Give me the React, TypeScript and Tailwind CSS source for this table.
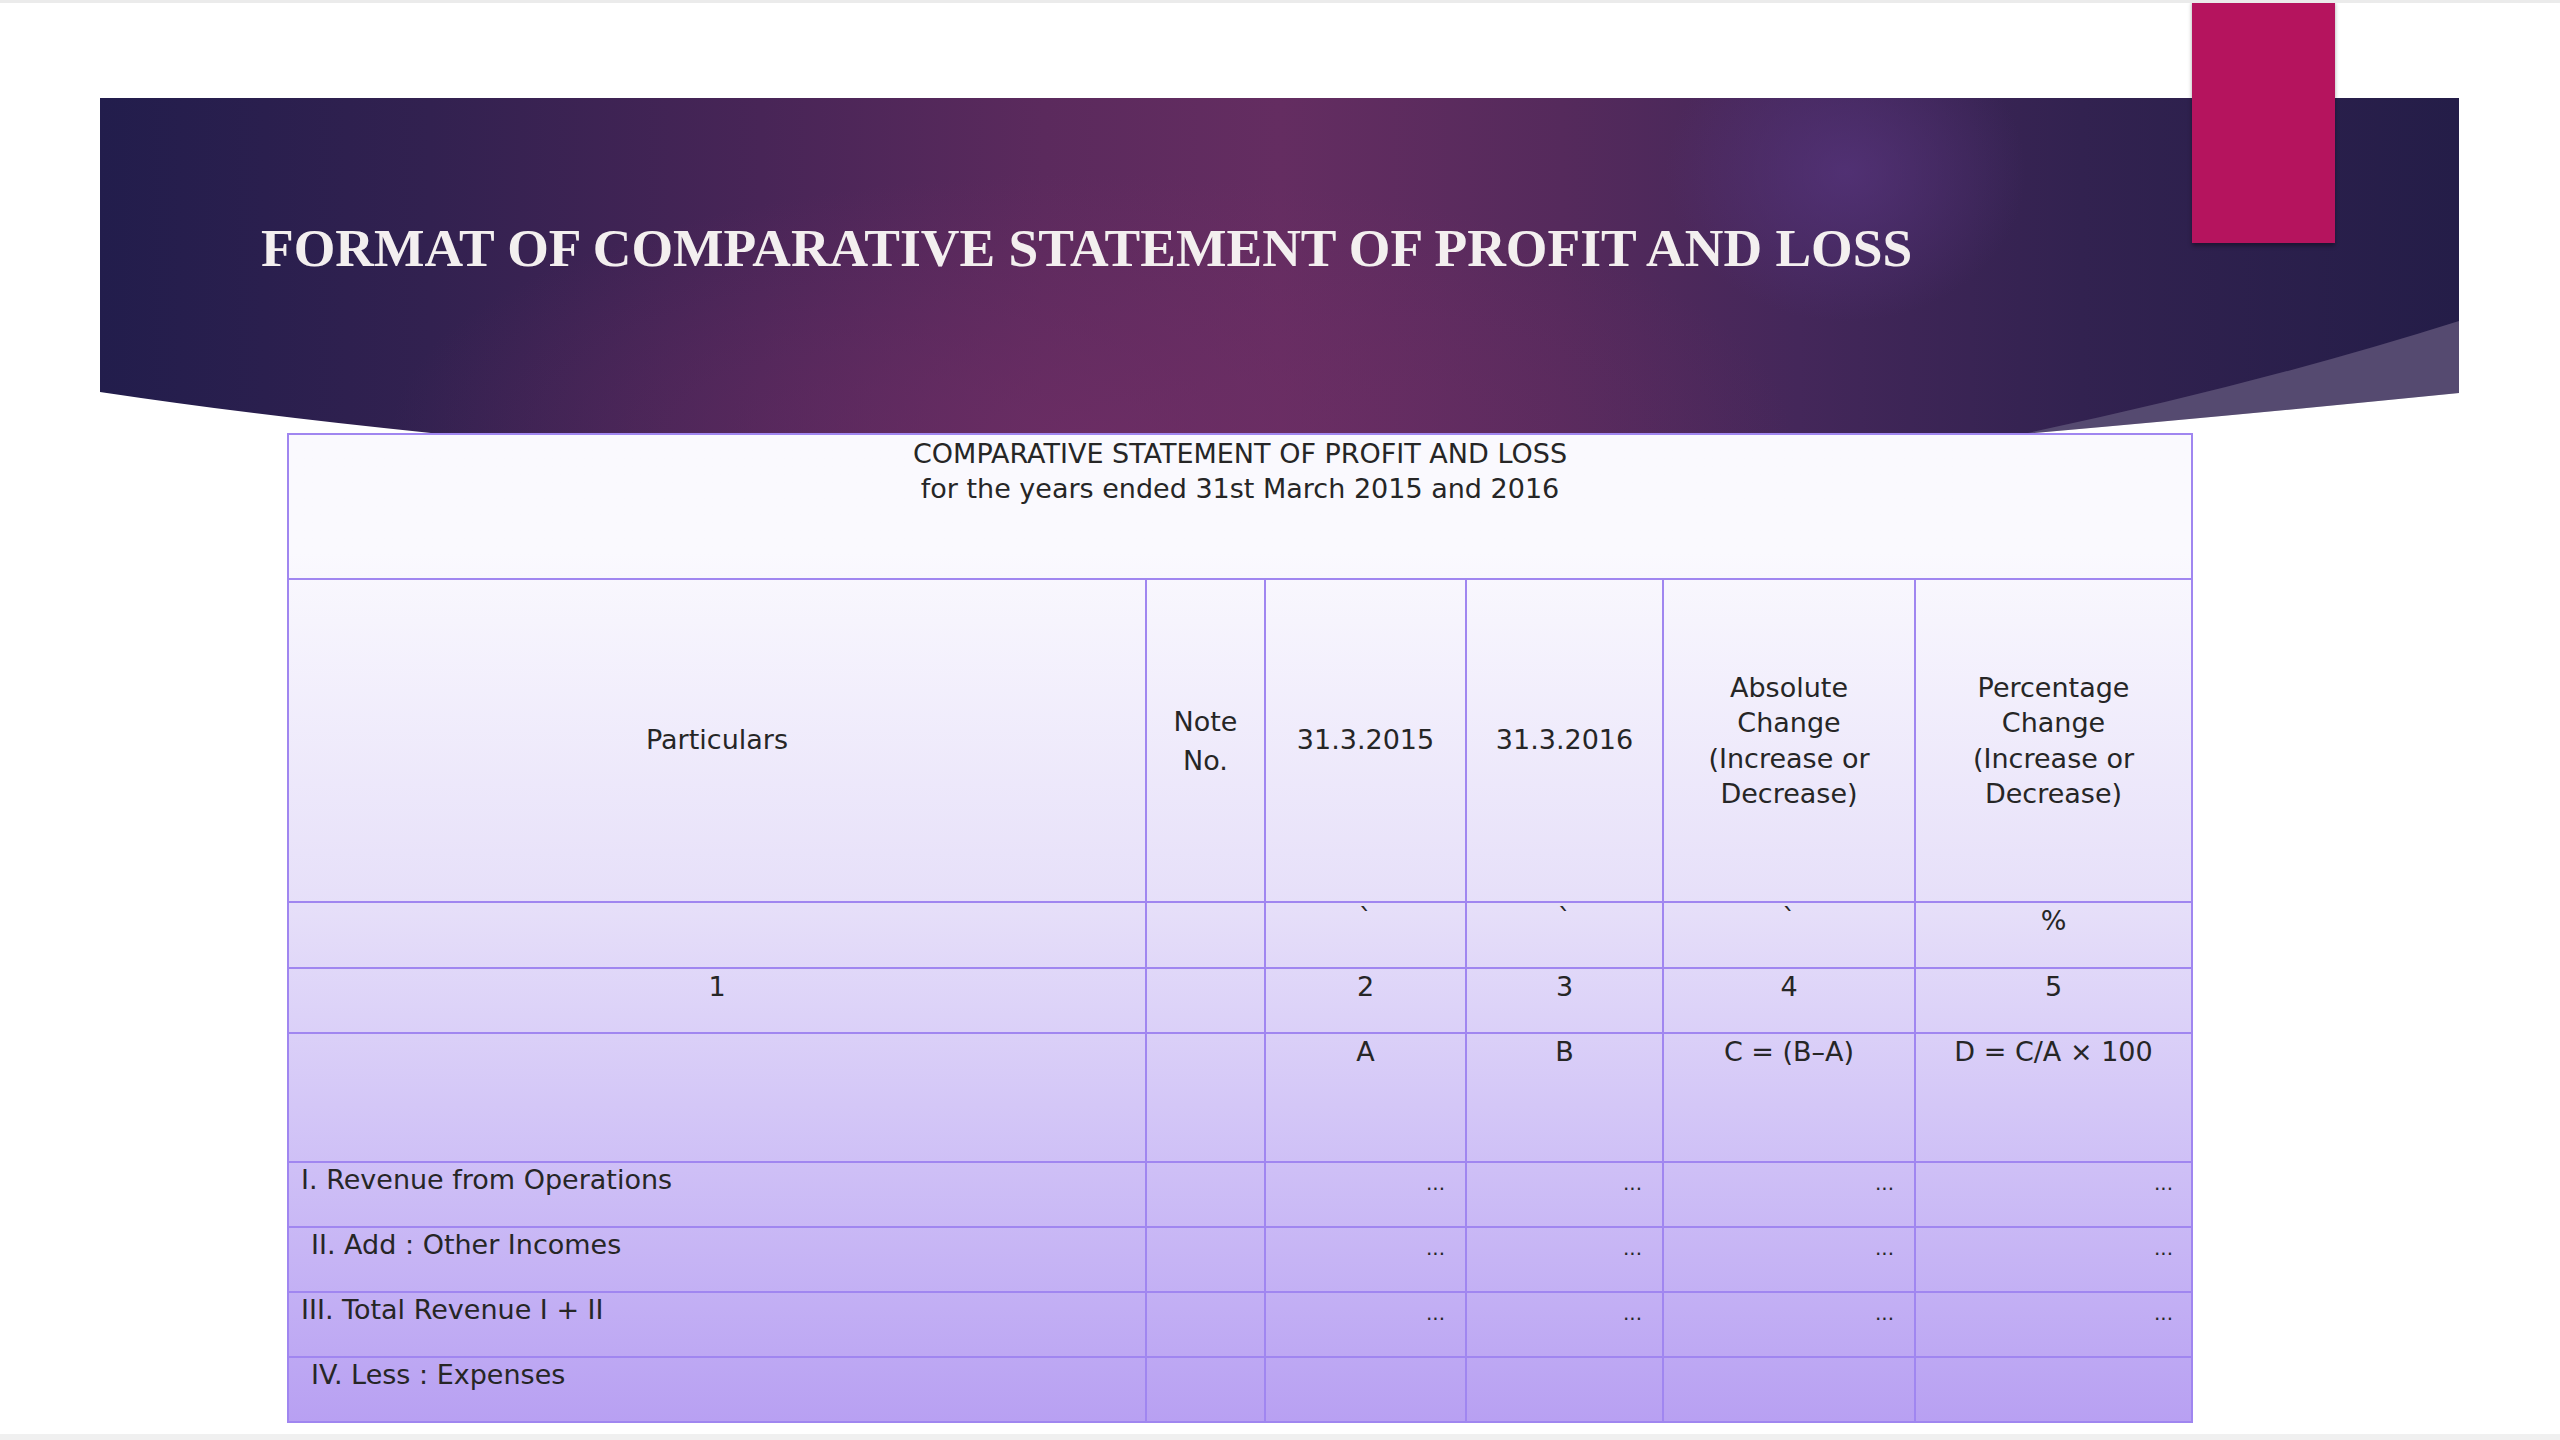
import React from 'react';

const cell = 'border-2 border-[#a086f0] p-0';
const dots = '...';

const rows = [
  { label: 'I. Revenue from Operations', indent: false },
  { label: 'II. Add : Other Incomes', indent: true },
  { label: 'III. Total Revenue I + II', indent: false },
  { label: 'IV. Less : Expenses', indent: true },
];

function Banner() {
  return (
    <div className="relative ml-[100px] w-[2359px] h-[335px] bg-[radial-gradient(ellipse_180px_150px_at_74%_22%,rgba(86,52,124,0.75),transparent),radial-gradient(ellipse_700px_260px_at_42%_100%,rgba(112,46,102,0.7),transparent),linear-gradient(90deg,#221d4c_0%,#322150_14%,#482557_28%,#5b2a5d_40%,#642d61_50%,#552a5c_62%,#44275a_72%,#322250_84%,#241d48_100%)]">
      <svg
        className="absolute inset-0 w-full h-full"
        viewBox="0 0 2359 335"
        preserveAspectRatio="none"
      >
        <path d="M0,294 Q160,318 341,336 L0,336 Z" fill="#ffffff" />
        <path d="M1923,336 Q2160,286 2359,223 L2359,295 Q2150,316 1923,336 Z" fill="#554a70" />
        <path d="M1923,336 Q2150,316 2359,295 L2359,336 Z" fill="#ffffff" />
      </svg>
      <h1 className="relative pl-[161px] pt-[122px] text-[53.5px] leading-[56px] font-bold text-[#f3efef] [font-family:'Liberation_Serif',serif]">
        FORMAT OF COMPARATIVE STATEMENT OF PROFIT AND LOSS
      </h1>
    </div>
  );
}

export default function App() {
  return (
    <div className="relative w-[2560px] h-[1440px] bg-white overflow-hidden flex flex-col border-t-[3px] border-[#ebebeb] [font-family:'DejaVu_Sans',sans-serif] text-[#262626]">
      <div className="h-[95px]" />
      <Banner />

      {/* pink tab hanging from the top */}
      <div className="absolute -top-[3px] left-[2192px] w-[143px] h-[243px] bg-[#b5145e] shadow-[0_3px_4px_rgba(0,0,0,0.35)]" />

      <table className="ml-[287px] w-[1904px] table-fixed border-collapse bg-linear-to-b from-[#faf9fe] from-12% via-[#e6dff9] via-48% to-[#b8a0f2] text-[27px]">
        <colgroup>
          <col className="w-[858px]" />
          <col className="w-[119px]" />
          <col className="w-[201px]" />
          <col className="w-[197px]" />
          <col className="w-[252px]" />
          <col className="w-[277px]" />
        </colgroup>
        <tbody>
          <tr className="h-[145px]">
            <td colSpan={6} className={`${cell} align-top text-center pt-[1px] leading-[35px]`}>
              COMPARATIVE STATEMENT OF PROFIT AND LOSS
              <br />
              for the years ended 31st March 2015 and 2016
            </td>
          </tr>
          <tr className="h-[323px] text-center align-middle">
            <td className={cell}>Particulars</td>
            <td className={`${cell} leading-[39px]`}>
              Note
              <br />
              No.
            </td>
            <td className={cell}>31.3.2015</td>
            <td className={cell}>31.3.2016</td>
            <td className={`${cell} leading-[35.5px]`}>
              Absolute
              <br />
              Change
              <br />
              (Increase or
              <br />
              Decrease)
            </td>
            <td className={`${cell} leading-[35.5px]`}>
              Percentage
              <br />
              Change
              <br />
              (Increase or
              <br />
              Decrease)
            </td>
          </tr>
          <tr className="h-[66px] text-center align-top leading-[32px]">
            <td className={cell} />
            <td className={cell} />
            <td className={cell}>`</td>
            <td className={cell}>`</td>
            <td className={cell}>`</td>
            <td className={`${cell} pt-[2px]`}>%</td>
          </tr>
          <tr className="h-[65px] text-center align-top leading-[36px]">
            <td className={cell}>1</td>
            <td className={cell} />
            <td className={cell}>2</td>
            <td className={cell}>3</td>
            <td className={cell}>4</td>
            <td className={cell}>5</td>
          </tr>
          <tr className="h-[129px] text-center align-top leading-[36px]">
            <td className={cell} />
            <td className={cell} />
            <td className={cell}>A</td>
            <td className={cell}>B</td>
            <td className={cell}>C = (B–A)</td>
            <td className={cell}>D = C/A × 100</td>
          </tr>
          {rows.map((r) => (
            <tr key={r.label} className="h-[65px] align-top leading-[34px]">
              <td className={`${cell} ${r.indent ? 'pl-[22px]' : 'pl-[12px]'}`}>{r.label}</td>
              <td className={cell} />
              {r.label.startsWith('IV') ? (
                <>
                  <td className={cell} />
                  <td className={cell} />
                  <td className={cell} />
                  <td className={cell} />
                </>
              ) : (
                <>
                  <td className={`${cell} text-right pr-[20px] pt-[3px] text-[20px]`}>{dots}</td>
                  <td className={`${cell} text-right pr-[20px] pt-[3px] text-[20px]`}>{dots}</td>
                  <td className={`${cell} text-right pr-[20px] pt-[3px] text-[20px]`}>{dots}</td>
                  <td className={`${cell} text-right pr-[18px] pt-[3px] text-[20px]`}>{dots}</td>
                </>
              )}
            </tr>
          ))}
        </tbody>
      </table>

      <div className="mt-auto h-[6px] bg-[#f0f0f0]" />
    </div>
  );
}
